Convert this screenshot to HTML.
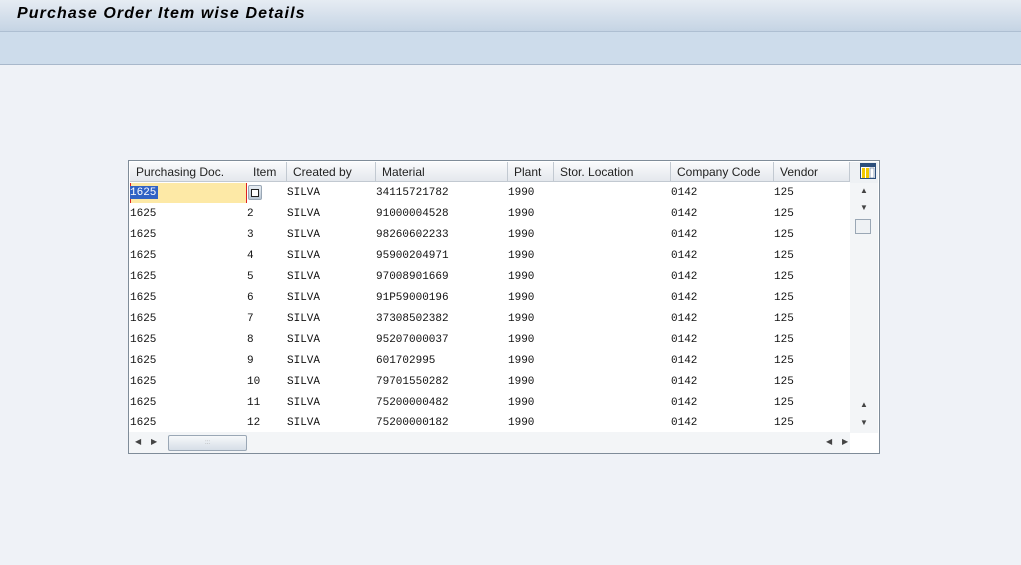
<!DOCTYPE html>
<html><head><style>
body{margin:0;width:1021px;height:565px;background:#eff2f7;font-family:"Liberation Sans",sans-serif;position:relative;overflow:hidden}
.t{position:absolute;left:0;top:0;width:1021px;height:31px;background:linear-gradient(#e6ecf3,#c5d4e4);border-bottom:1px solid #aebfd2}
.t span{position:absolute;left:17px;top:5px;font:italic bold 16px "Liberation Sans",sans-serif;letter-spacing:1.1px;color:#000}
.tb{position:absolute;left:0;top:32px;width:1021px;height:32px;background:#cddceb;border-bottom:1px solid #a8b8cb}
.g{position:absolute;left:128px;top:160px;width:750px;height:292px;border:1px solid #7f8c99;background:#fff}
.h{position:absolute;top:1px;height:20px;background:linear-gradient(#fafbfc,#e4e8ed);border-right:1px solid #c2c9d1;border-bottom:1px solid #c2c9d1;font-size:12px;line-height:20px;color:#222;box-sizing:border-box;padding-left:6px}
.c{position:absolute;font:11px "Liberation Mono",monospace;color:#111;white-space:pre}
.vs{position:absolute;left:721px;top:22px;width:28px;height:250px;background:#f3f5f7}
.hs{position:absolute;left:0;top:271px;width:721px;height:21px;background:#f3f5f7}
.ar{position:absolute;font-size:8px;color:#444}
</style></head><body>
<div class="t"><span>Purchase Order Item wise Details</span></div>
<div class="tb"></div>
<div class="g">
<div class="h" style="left:1px;width:118px">Purchasing Doc.</div>
<div class="h" style="left:118px;width:40px">Item</div>
<div class="h" style="left:158px;width:89px">Created by</div>
<div class="h" style="left:247px;width:132px">Material</div>
<div class="h" style="left:379px;width:46px">Plant</div>
<div class="h" style="left:425px;width:117px">Stor. Location</div>
<div class="h" style="left:542px;width:103px">Company Code</div>
<div class="h" style="left:645px;width:76px">Vendor</div>
<div style="position:absolute;left:721px;top:1px;width:28px;height:21px;background:#eef1f4"></div>
<svg style="position:absolute;left:731px;top:2px" width="16" height="16"><rect x="0.5" y="0.5" width="15" height="15" fill="#fff" stroke="#2c4f7c"/><rect x="1" y="1" width="14" height="3" fill="#2c4f7c"/><rect x="2" y="5" width="3" height="10" fill="#f2c800"/><rect x="6" y="5" width="3" height="10" fill="#f2c800"/><rect x="10" y="5" width="4" height="10" fill="#fff" stroke="#2c4f7c" stroke-width="0.5"/></svg>
<div style="position:absolute;left:1px;top:22px;width:117px;height:20px;background:#fde9a6;border-left:1px solid #d22;border-right:1px solid #d22;box-sizing:border-box"></div>
<div style="position:absolute;left:1px;top:25px;width:28px;height:13px;background:#3163c5"></div>
<div style="position:absolute;left:119px;top:24px;width:14px;height:15px;background:linear-gradient(#e8edf3,#b9c6d4);border:1px solid #9aa7b5;border-radius:2px;box-sizing:border-box"></div>
<div style="position:absolute;left:122px;top:28px;width:6px;height:6px;border:1px solid #222;background:#fff"></div>
<div class="vs"><div class="ar" style="left:10px;top:3px">▲</div><div class="ar" style="left:10px;top:20px">▼</div><div style="position:absolute;left:5px;top:36px;width:14px;height:13px;border:1px solid #9aa7b5;background:#eef1f4"></div><div class="ar" style="left:10px;top:217px">▲</div><div class="ar" style="left:10px;top:235px">▼</div></div>
<div class="hs"><div class="ar" style="left:6px;top:5px">◀</div><div class="ar" style="left:22px;top:5px">▶</div><div style="position:absolute;left:39px;top:3px;width:77px;height:14px;border:1px solid #9aa7b5;border-radius:2px;background:linear-gradient(#f6f8fa,#d6dee7);font-size:6px;text-align:center;color:#999;line-height:14px">:::</div><div class="ar" style="left:697px;top:5px">◀</div><div class="ar" style="left:713px;top:5px">▶</div></div>
<div id="rows"></div>
</div>
<script>
var m=["34115721782","91000004528","98260602233","95900204971","97008901669","91P59000196","37308502382","95207000037","601702995","79701550282","75200000482","75200000182"];
var h="";
for(var i=0;i<12;i++){var y=24+i*21-(i==11?1:0);
h+='<div class="c" style="left:1px;top:'+y+'px;'+(i==0?'color:#fff':'')+'">1625</div>';
if(i>0)h+='<div class="c" style="left:118px;top:'+y+'px">'+(i+1)+'</div>';
h+='<div class="c" style="left:158px;top:'+y+'px">SILVA</div><div class="c" style="left:247px;top:'+y+'px">'+m[i]+'</div><div class="c" style="left:379px;top:'+y+'px">1990</div><div class="c" style="left:542px;top:'+y+'px">0142</div><div class="c" style="left:645px;top:'+y+'px">125</div>';}
document.getElementById("rows").innerHTML=h;
</script>
<style>.c{line-height:16px}</style>
</body></html>
